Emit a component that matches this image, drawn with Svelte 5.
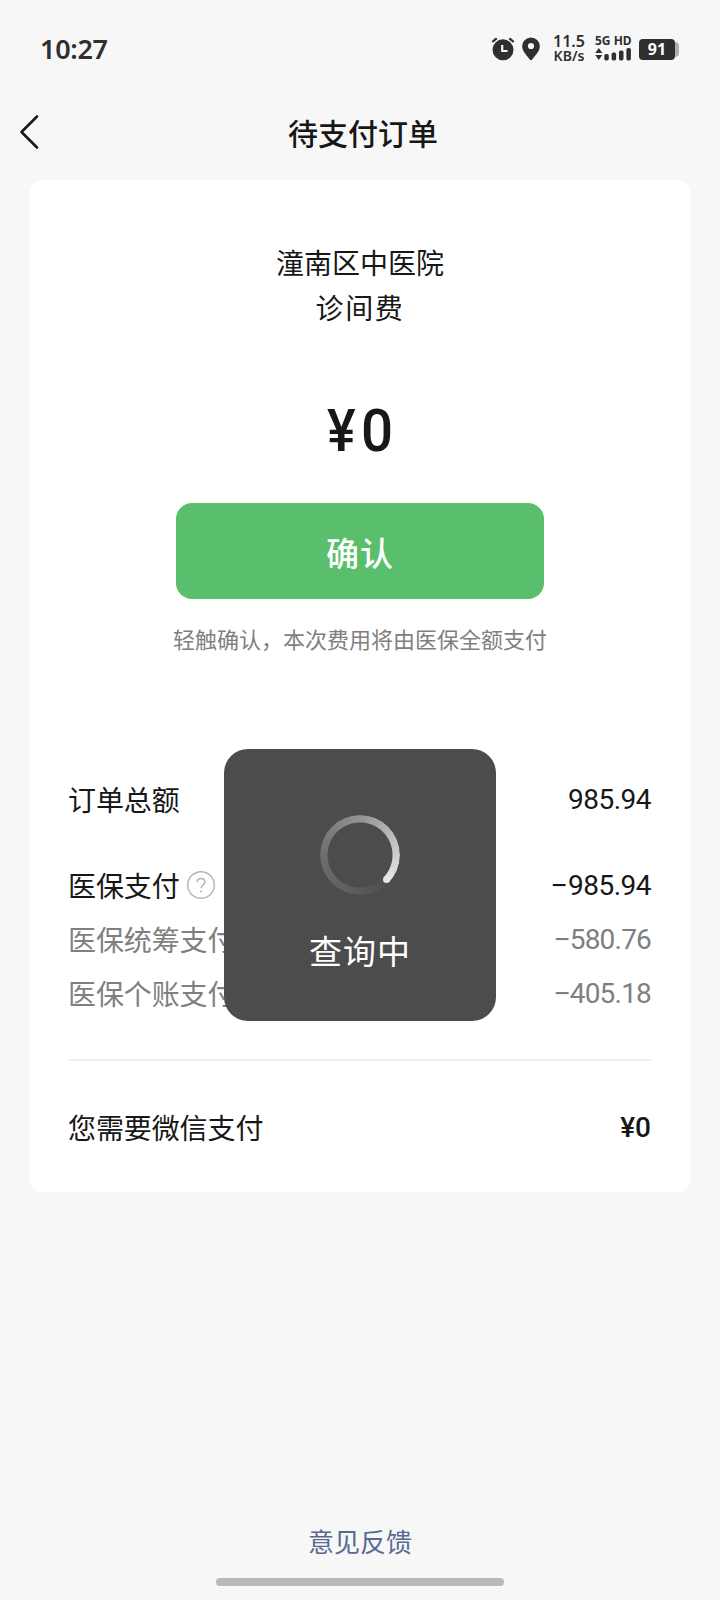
<script>
  const rows = [
    { label: '订单总额', value: '985.94', kind: 'total' },
    { label: '医保支付', value: '985.94', negative: true, kind: 'insurance', help: true },
    { label: '医保统筹支付', value: '580.76', negative: true, kind: 'sub' },
    { label: '医保个账支付', value: '405.18', negative: true, kind: 'sub' }
  ];
</script>

<div class="screen">
  <header class="status">
    <span class="time">10:27</span>
    <div class="indicators">
      <svg class="alarm" width="24" height="24" viewBox="0 0 24 24">
        <circle cx="12" cy="12.8" r="10.5" fill="#2f2f2f" />
        <path d="M2 4.300 5 1.900M22 4.300 19 1.900" stroke="#2f2f2f" stroke-width="2.200" stroke-linecap="round" />
        <path d="M11.200 8v6h5.400" fill="none" stroke="#f7f7f7" stroke-width="2.200" />
      </svg>
      <svg class="pin" width="18" height="24" viewBox="0 0 18 24">
        <path d="M9 .5A8.8 8.8 0 0 0 .2 9.3C.2 14.300 5 18.800 7.800 22.600 8.500 23.500 9.500 23.500 10.200 22.600 13 18.800 17.800 14.300 17.800 9.300A8.800 8.800 0 0 0 9 .5Z" fill="#2f2f2f" />
        <circle cx="9" cy="9" r="3.1" fill="#f7f7f7" />
      </svg>
      <div class="speed"><span class="rate">11.5</span><span class="unit">KB/s</span></div>
      <div class="network">
        <span>5G HD</span>
        <svg width="37" height="13" viewBox="0 0 37 13">
          <g fill="#2f2f2f">
            <path d="M3.800 0 7.300 5H.3ZM3.800 12 .3 7H7.300Z" />
            <rect x="9.300" y="6" width="4.500" height="6.500" rx="1.700" />
            <rect x="16.600" y="4.500" width="4.500" height="8" rx="1.700" />
            <rect x="24" y="2.500" width="4.500" height="10" rx="1.700" />
            <rect x="31.400" y="0" width="4.500" height="12.500" rx="1.700" />
          </g>
        </svg>
      </div>
      <div class="battery"><span>91</span></div>
    </div>
  </header>

  <nav>
    <svg class="back" width="22" height="36" viewBox="0 0 22 36">
      <path d="M18 2.500 2.500 18 18 33.500" fill="none" stroke="#181818" stroke-width="2.600" stroke-linecap="round" stroke-linejoin="round" />
    </svg>
    <h1>待支付订单</h1>
  </nav>

  <main>
    <p class="hospital">潼南区中医院</p>
    <p class="fee">诊间费</p>
    <p class="amount"><span class="yen">¥</span><span class="zero">0</span></p>
    <button>确认</button>
    <p class="hint">轻触确认，本次费用将由医保全额支付</p>

    <section class="rows">
      {#each rows as row}
        <div class="row {row.kind}">
          <span class="label">{row.label}</span>
          {#if row.help}
            <svg class="help" width="28" height="28" viewBox="0 0 28 28" fill="none" stroke="#b5b5b5">
              <circle cx="14" cy="14" r="13.300" stroke-width="1.400" />
              <path d="M10.200 11.200C10.200 8.800 11.800 7.500 14 7.500s3.900 1.400 3.900 3.500c0 2.800-3.800 3.200-3.800 6.300" stroke-width="1.500" />
              <circle cx="14.100" cy="20.500" r="1" fill="#b5b5b5" stroke="none" />
            </svg>
          {/if}
          <span class="value">{#if row.negative}<span class="minus">−</span>{/if}{row.value}</span>
        </div>
      {/each}
    </section>

    <div class="row need">
      <span class="label">您需要微信支付</span>
      <span class="value strong">¥0</span>
    </div>
  </main>

  <footer>
    <a href="#feedback">意见反馈</a>
    <div class="home"></div>
  </footer>

  <div class="toast">
    <div class="spinner"><div class="ring"></div><div class="cap"></div></div>
    <span>查询中</span>
  </div>
</div>

<style>
  :global(body) { margin: 0; background: #f7f7f7; }
  .screen {
    position: relative;
    display: flex;
    flex-direction: column;
    width: 720px;
    height: 1600px;
    overflow: hidden;
    background: #f7f7f7;
    color: #171717;
    font-family: "Noto Sans CJK SC", sans-serif;
  }
  p, h1 { margin: 0; font-weight: 400; }

  .status {
    display: flex;
    align-items: center;
    justify-content: space-between;
    box-sizing: border-box;
    height: 98px;
    padding: 0 42px 0 40px;
    color: #2f2f2f;
  }
  .time { font: 600 27px/32px "Noto Sans", sans-serif; letter-spacing: -.3px; }
  .indicators { display: flex; align-items: center; height: 32px; }
  .alarm { margin: -1px 7px 0 0; }
  .pin { margin: -1px 12px 0 0; }
  .speed {
    display: grid;
    grid-template-rows: 15px 14px;
    justify-items: center;
    width: 34px;
    margin: -1px 9px 0 0;
  }
  .rate { font: 600 16px/14px "Noto Sans", sans-serif; }
  .unit { font: 600 14px/14px "Noto Sans", sans-serif; }
  .network { display: flex; flex-direction: column; gap: 1px; width: 38px; margin: -3px 6px 0 0; }
  .network span { font: 700 12px/13px "Noto Sans", sans-serif; white-space: nowrap; }
  .network svg { display: block; }
  .battery {
    position: relative;
    display: flex;
    align-items: center;
    justify-content: center;
    width: 36px;
    height: 21px;
    margin-right: 3px;
    border-radius: 4px;
    background: #2f2f2f;
    color: #fff;
    font: 700 16px/21px "Noto Sans", sans-serif;
  }
  .battery::after {
    content: "";
    position: absolute;
    left: 36px;
    top: 3px;
    width: 4px;
    height: 15px;
    border-radius: 0 5px 5px 0;
    background: #b0b0b0;
  }

  nav { display: grid; grid-template-columns: 60px 1fr 60px; align-items: center; height: 82px; }
  .back { margin: -14px 0 0 19px; }
  h1 { margin: -15px 0 0 6px; text-align: center; font-size: 30px; line-height: 44px; font-weight: 500; }

  main {
    display: flex;
    flex-direction: column;
    align-items: center;
    box-sizing: border-box;
    width: 660px;
    height: 1012px;
    margin-left: 30px;
    padding: 60px 38px 0;
    border-radius: 12px;
    background: #fff;
  }
  .hospital { font-size: 28px; line-height: 44px; }
  .fee { margin-top: 1px; font-size: 28px; line-height: 44px; letter-spacing: 1.600px; }
  .amount { display: flex; margin-top: 67px; font: 500 60px/70px Roboto, sans-serif; }
  .yen { display: block; width: 33px; margin-left: 2px; transform: scaleX(.9); transform-origin: left; }
  .zero { display: block; transform: scaleX(.94); }
  button {
    width: 368px;
    height: 96px;
    margin-top: 37px;
    padding: 2px 0 0;
    border: 0;
    border-radius: 16px;
    background: #59bf6c;
    color: #fff;
    font: 500 33px/94px "Noto Sans CJK SC", sans-serif;
    letter-spacing: 1px;
  }
  .hint { margin-top: 23px; color: #7f7f7f; font-size: 22px; line-height: 32px; white-space: nowrap; }
  .rows {
    box-sizing: border-box;
    width: 584px;
    height: 288px;
    margin-top: 119px;
    border-bottom: 2px solid #eee;
  }
  .row { display: flex; align-items: center; box-sizing: border-box; width: 584px; height: 54px; padding-right: 1px; }
  .label { margin-top: -3px; font-size: 28px; line-height: 40px; letter-spacing: -.1px; }
  .help { margin: -2px 0 0 7px; }
  .value { margin-left: auto; font: 400 28px/40px Roboto, sans-serif; letter-spacing: -.5px; }
  .minus { display: inline-block; margin-right: 1px; transform: scaleX(1.12); }
  .strong { font-weight: 500; letter-spacing: 0; }
  .insurance { margin-top: 32px; }
  .sub { color: #7f7f7f; }
  .sub .value { letter-spacing: -.8px; }
  .need { margin-top: 40px; }

  footer { display: flex; flex-direction: column; align-items: center; margin-top: auto; padding-bottom: 14px; }
  a { color: #586a91; font-size: 26px; line-height: 38px; text-decoration: none; }
  .home { width: 288px; height: 8px; margin-top: 18px; border-radius: 4px; background: #bababa; }

  .toast {
    position: absolute;
    left: 224px;
    top: 749px;
    display: flex;
    flex-direction: column;
    align-items: center;
    box-sizing: border-box;
    width: 272px;
    height: 272px;
    padding-top: 66px;
    border-radius: 24px;
    background: #4c4c4c;
    color: #fff;
  }
  .toast span { margin-top: 31px; font-size: 33px; line-height: 48px; letter-spacing: 1px; }
  .spinner { position: relative; width: 80px; height: 80px; }
  .ring {
    width: 80px;
    height: 80px;
    border-radius: 50%;
    background: conic-gradient(from 133deg, #4c4c4c 0deg, #5b5b5b 50deg, #6e6e6e 137deg, #929292 227deg, #c4c4c4 300deg, #e6e6e6 360deg);
    mask: radial-gradient(circle, transparent 32px, #000 33px);
  }
  .cap { position: absolute; left: 63.200px; top: 61.400px; width: 7px; height: 7px; border-radius: 50%; background: #e6e6e6; }
</style>
